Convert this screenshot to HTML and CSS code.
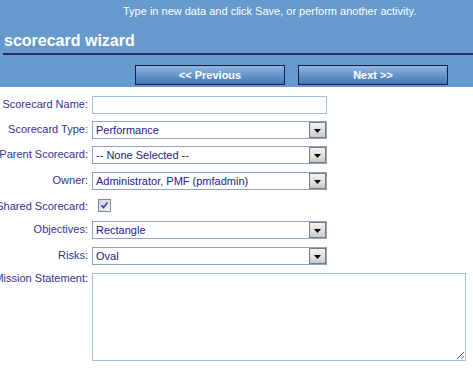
FILE: index.html
```html
<!DOCTYPE html>
<html>
<head>
<meta charset="utf-8">
<link rel="stylesheet" href="styles.css">
</head>
<body>
<div class="header">
  <div class="hint">Type in new data and click Save, or perform another activity.</div>
  <div class="title">scorecard wizard</div>
  <div class="nav">
    <button class="btn" type="button">&lt;&lt; Previous</button>
    <button class="btn" type="button">Next &gt;&gt;</button>
  </div>
</div>
<div class="form">
  <div class="label">Scorecard Name:</div>
  <div class="ctl"><input class="text" type="text"></div>

  <div class="label">Scorecard Type:</div>
  <div class="ctl"><div class="select"><span class="val">Performance</span><span class="arrow"><svg width="7" height="4" viewBox="0 0 7 4"><path d="M0 0H7L3.5 4Z" fill="#000"/></svg></span></div></div>

  <div class="label">Parent Scorecard:</div>
  <div class="ctl"><div class="select"><span class="val">-- None Selected --</span><span class="arrow"><svg width="7" height="4" viewBox="0 0 7 4"><path d="M0 0H7L3.5 4Z" fill="#000"/></svg></span></div></div>

  <div class="label">Owner:</div>
  <div class="ctl"><div class="select"><span class="val">Administrator, PMF (pmfadmin)</span><span class="arrow"><svg width="7" height="4" viewBox="0 0 7 4"><path d="M0 0H7L3.5 4Z" fill="#000"/></svg></span></div></div>

  <div class="label label-check">Shared Scorecard:</div>
  <div class="ctl"><span class="check"><svg width="11" height="11" viewBox="0 0 11 11"><path d="M2.5 5.2L4.5 7.6L8.6 2.6" fill="none" stroke="#3d3f99" stroke-width="1.6"/></svg></span></div>

  <div class="label">Objectives:</div>
  <div class="ctl"><div class="select"><span class="val">Rectangle</span><span class="arrow"><svg width="7" height="4" viewBox="0 0 7 4"><path d="M0 0H7L3.5 4Z" fill="#000"/></svg></span></div></div>

  <div class="label">Risks:</div>
  <div class="ctl"><div class="select"><span class="val">Oval</span><span class="arrow"><svg width="7" height="4" viewBox="0 0 7 4"><path d="M0 0H7L3.5 4Z" fill="#000"/></svg></span></div></div>

  <div class="label label-top">Mission Statement:</div>
  <div class="ctl"><textarea class="area"></textarea></div>
</div>
</body>
</html>
```
FILE: styles.css
```css
html, body {
  margin: 0;
  padding: 0;
  background: #ffffff;
  font-family: "Liberation Sans", Arial, sans-serif;
  overflow: hidden;
}

.header {
  background: #6699cc;
  height: 87px;
  box-sizing: border-box;
  padding-top: 4px;
}

.hint {
  color: #ffffff;
  font-size: 11px;
  line-height: 14px;
  padding-left: 123px;
  white-space: nowrap;
}

.title {
  margin: 12px 0 0 3px;
  padding-left: 1px;
  padding-bottom: 2px;
  color: #ffffff;
  font-weight: bold;
  font-size: 16px;
  line-height: 21px;
  border-bottom: 2px solid #2c2a6a;
}

.nav {
  display: flex;
  gap: 13px;
  margin-top: 10px;
  padding-left: 135px;
}

.btn {
  width: 150px;
  height: 20px;
  margin: 0;
  padding: 0;
  border: 1px solid #1d1b4c;
  background: linear-gradient(to bottom, #8fb6e3 0%, #6f9dd2 40%, #5585bd 75%, #4474ad 100%);
  color: #ffffff;
  font-family: "Liberation Sans", Arial, sans-serif;
  font-weight: bold;
  font-size: 11px;
  line-height: 18px;
  text-align: center;
}

.form {
  display: grid;
  grid-template-columns: 88px 1fr;
  grid-template-rows: 25px 25px 26px 25px 24px 26px 26px auto;
  column-gap: 4px;
  padding-top: 9px;
}

.label {
  display: flex;
  justify-content: flex-end;
  white-space: nowrap;
  color: #333399;
  font-size: 11px;
  line-height: 16px;
}

.label-check {
  padding-top: 1px;
}

.label-top {
  margin-top: -3px;
}

.ctl {
  display: flex;
  align-items: flex-start;
}

.text {
  box-sizing: border-box;
  width: 235px;
  height: 18px;
  margin: 0;
  padding: 0 3px;
  border: 1px solid #a6bde2;
  background: #ffffff;
  font-family: "Liberation Sans", Arial, sans-serif;
  font-size: 11px;
  outline: none;
}

.select {
  box-sizing: border-box;
  width: 235px;
  height: 18px;
  border: 1px solid #8ea4c2;
  background: #ffffff;
  display: flex;
  align-items: center;
}

.val {
  flex: 1;
  padding-left: 3px;
  color: #22228a;
  font-size: 11px;
  line-height: 16px;
  white-space: nowrap;
  overflow: hidden;
}

.arrow {
  box-sizing: border-box;
  width: 17px;
  height: 16px;
  border: 1px solid #7c7c7c;
  background: linear-gradient(to bottom, #f2f2f2 0%, #dedede 60%, #c8c8c8 100%);
  display: flex;
  align-items: center;
  justify-content: center;
}

.arrow svg {
  display: block;
  margin-top: 1px;
}

.check {
  box-sizing: border-box;
  width: 13px;
  height: 13px;
  margin: 2px 0 0 6px;
  border: 1px solid #7c8aa6;
  background: linear-gradient(to bottom right, #cfd3db 0%, #e4e6ea 60%, #f1f2f4 100%);
  display: flex;
  align-items: center;
  justify-content: center;
}

.check svg {
  display: block;
}

.area {
  box-sizing: border-box;
  width: 374px;
  height: 88px;
  margin: 0;
  border: 1px solid #a6bde2;
  background: #ffffff;
  font-family: "Liberation Sans", Arial, sans-serif;
  font-size: 11px;
  outline: none;
}
```
